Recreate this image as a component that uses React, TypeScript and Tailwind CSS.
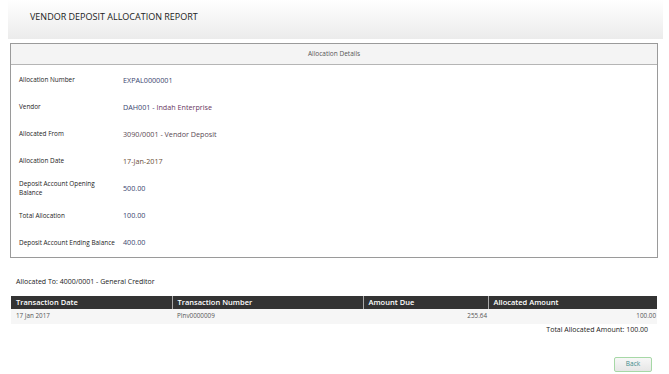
const rows: { label: string; value: React.ReactNode }[] = [
  { label: 'Allocation Number', value: <span className="text-[#3a4670]">EXPAL0000001</span> },
  {
    label: 'Vendor',
    value: (
      <>
        <span className="text-[#3a4670]">DAH001 - </span>
        <span className="text-[#6a3862]">Indah Enterprise</span>
      </>
    ),
  },
  { label: 'Allocated From', value: <span className="text-[#5a4a55]">3090/0001 - Vendor Deposit</span> },
  { label: 'Allocation Date', value: <span className="text-[#6a4e36]">17-Jan-2017</span> },
  { label: 'Deposit Account Opening Balance', value: <span className="text-[#3a4670]">500.00</span> },
  { label: 'Total Allocation', value: <span className="text-[#3a4670]">100.00</span> },
  { label: 'Deposit Account Ending Balance', value: <span className="text-[#3a4670]">400.00</span> },
]

export default function App() {
  return (
    <div
      className="relative h-[374px] w-[669px] overflow-hidden bg-white text-[#333]"
      style={{ fontFamily: '"Open Sans", "Noto Sans", sans-serif' }}
    >
      <div className="ml-[8px] h-[39px] w-[655px] bg-gradient-to-b from-white to-[#ebebeb] pl-[22px] pt-[10px]">
        <h1 className="text-[9px] leading-[14px] text-[#222]">VENDOR DEPOSIT ALLOCATION REPORT</h1>
      </div>

      <div className="ml-[10px] mt-[4px] w-[648px] border border-[#9a9a9a] pb-[1px]">
        <div className="flex h-[21px] items-center justify-center border-b border-[#b5b5b5] bg-[#f4f4f4] text-[6.5px] text-[#555]">
          Allocation Details
        </div>
        <div className="pt-[1px]">
          {rows.map((r) => (
            <div key={r.label} className="flex h-[27.1px] items-center pl-[8px]">
              <div className="w-[104px] pr-[6px] text-[6.4px] leading-[9px] text-[#222]">{r.label}</div>
              <div className="text-[7.2px] leading-[10px]">{r.value}</div>
            </div>
          ))}
        </div>
      </div>

      <div className="ml-[16px] mt-[19px] text-[7px] leading-[10px] text-[#222]">
        Allocated To: 4000/0001 - General Creditor
      </div>

      <table className="ml-[11px] mt-[9px] w-[646px] table-fixed border-collapse">
        <colgroup>
          <col className="w-[161px]" />
          <col className="w-[191px]" />
          <col className="w-[125px]" />
          <col className="w-[169px]" />
        </colgroup>
        <thead>
          <tr className="h-[13px] bg-[#333] text-left text-[7.5px] text-white">
            <th className="px-[5px] font-semibold">Transaction Date</th>
            <th className="border-l border-[#aaa] px-[5px] font-semibold">Transaction Number</th>
            <th className="border-l border-[#aaa] px-[5px] font-semibold">Amount Due</th>
            <th className="border-l border-[#aaa] px-[5px] font-semibold">Allocated Amount</th>
          </tr>
        </thead>
        <tbody>
          <tr className="h-[15px] bg-[#f6f6f6] text-[6.3px] text-[#555]">
            <td className="px-[5px]">17 Jan 2017</td>
            <td className="px-[5px]">PInv0000009</td>
            <td className="px-[1px] text-right">255.64</td>
            <td className="px-[1px] text-right">100.00</td>
          </tr>
        </tbody>
      </table>

      <div className="mr-[21px] mt-[1px] text-right text-[7px] leading-[10px] text-[#222]">
        Total Allocated Amount: 100.00
      </div>

      <div className="mr-[17px] mt-[22px] flex justify-end">
        <button
          type="button"
          className="h-[15px] w-[38px] rounded-[2px] border border-[#a6d8a6] bg-gradient-to-b from-[#f7f7f7] to-[#e6e6e6] text-[6.5px] text-[#3b8a8a]"
        >
          Back
        </button>
      </div>
    </div>
  )
}
